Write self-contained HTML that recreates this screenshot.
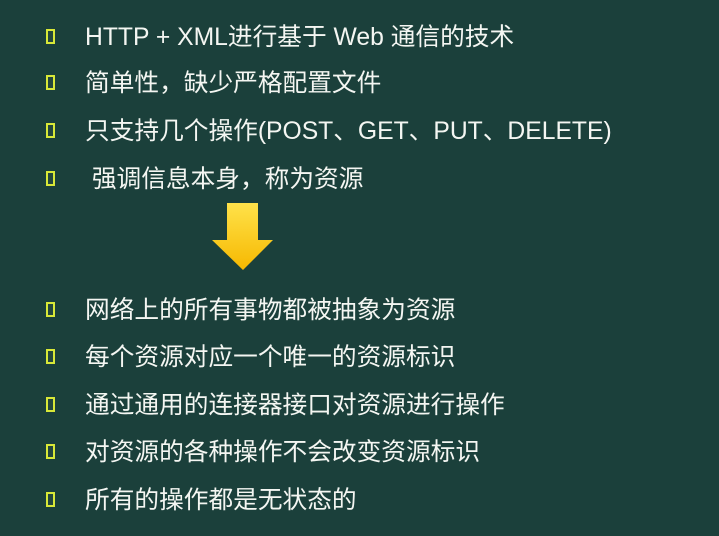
<html><head><style>
body{margin:0;width:719px;height:536px;background:#1b403b;overflow:hidden;position:relative;font-family:"Liberation Sans","Noto Sans CJK SC",sans-serif;color:#f4f6f2}
.r{position:absolute;left:0;height:30px;line-height:30px;font-size:24.7px}
.b{position:absolute;left:46px;top:8px;width:5px;height:11px;border:2px solid #d8e838;background:#24463e}
.t{position:absolute;left:85px;top:2px;white-space:nowrap}
</style></head><body>
<div class="r" style="top:21px"><div class="b"></div><div class="t">HTTP + XML进行基于 Web 通信的技术</div></div>
<div class="r" style="top:67px"><div class="b"></div><div class="t">简单性，缺少严格配置文件</div></div>
<div class="r" style="top:115px"><div class="b"></div><div class="t">只支持几个操作(POST、GET、PUT、DELETE)</div></div>
<div class="r" style="top:163px"><div class="b"></div><div class="t">&nbsp;强调信息本身，称为资源</div></div>
<svg style="position:absolute;left:0;top:0" width="719" height="536"><defs><linearGradient id="g" x1="0" y1="0" x2="0" y2="1"><stop offset="0" stop-color="#ffe24a"/><stop offset="1" stop-color="#f6b800"/></linearGradient></defs><path d="M227 203H258V240H273L243 270L212 240H227Z" fill="url(#g)"/></svg>
<div class="r" style="top:294px"><div class="b"></div><div class="t">网络上的所有事物都被抽象为资源</div></div>
<div class="r" style="top:341px"><div class="b"></div><div class="t">每个资源对应一个唯一的资源标识</div></div>
<div class="r" style="top:389px"><div class="b"></div><div class="t">通过通用的连接器接口对资源进行操作</div></div>
<div class="r" style="top:436px"><div class="b"></div><div class="t">对资源的各种操作不会改变资源标识</div></div>
<div class="r" style="top:484px"><div class="b"></div><div class="t">所有的操作都是无状态的</div></div>
</body></html>
